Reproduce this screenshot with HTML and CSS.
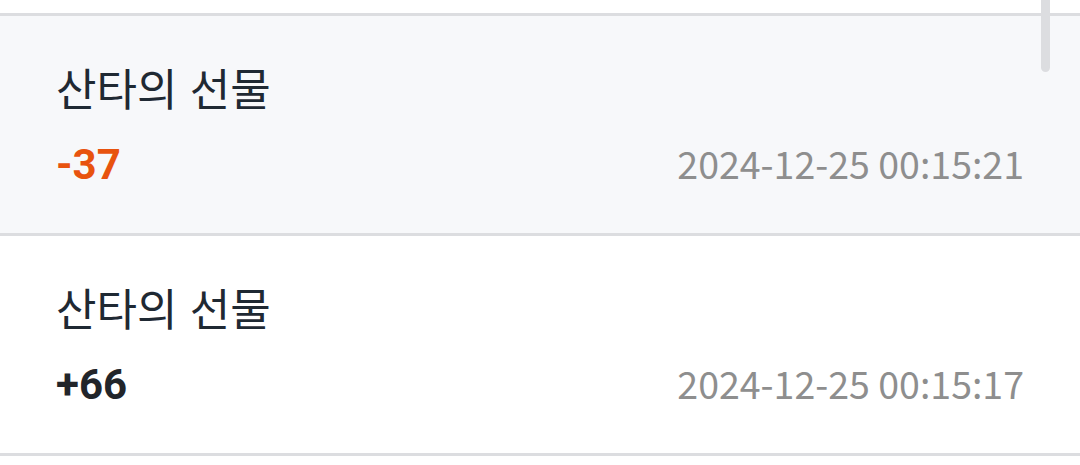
FILE: index.html
```html
<!DOCTYPE html>
<html lang="ko">
<head>
<meta charset="utf-8">
<link rel="stylesheet" href="styles.css">
</head>
<body>
<div class="page">
  <div class="top"></div>
  <ul class="list">
    <li class="row row-active">
      <div class="title">산타의 선물</div>
      <div class="meta">
        <span class="amount minus">-37</span>
        <span class="date" lang="en">2024-12-25 00:15:21</span>
      </div>
    </li>
    <li class="row">
      <div class="title">산타의 선물</div>
      <div class="meta">
        <span class="amount plus">+66</span>
        <span class="date" lang="en">2024-12-25 00:15:17</span>
      </div>
    </li>
  </ul>
  <div class="scrollbar"></div>
</div>
</body>
</html>
```
FILE: styles.css
```css
html, body {
  margin: 0;
  padding: 0;
  background: #ffffff;
}
.page {
  position: relative;
  width: 1080px;
  height: 465px;
  overflow: hidden;
  font-family: "Noto Sans CJK KR", "Noto Sans", sans-serif;
}
.top {
  height: 13px;
  border-bottom: 3px solid #dcdde0;
}
.list {
  list-style: none;
  margin: 0;
  padding: 0;
}
.row {
  height: 220px;
  box-sizing: border-box;
  border-bottom: 3px solid #dcdde0;
  padding: 2px 56px 0 56px;
  display: flex;
  flex-direction: column;
  justify-content: center;
  gap: 20px;
}
.row-active {
  background: #f7f8fa;
}
.title {
  font-size: 44px;
  line-height: 56px;
  color: #1f2933;
}
.meta {
  display: flex;
  justify-content: space-between;
  align-items: baseline;
  line-height: 56px;
}
.amount {
  font-family: Roboto, "Noto Sans", sans-serif;
  font-weight: 700;
  font-size: 42px;
}
.minus { color: #e8530e; }
.plus { color: #22252a; }
.date {
  font-size: 37.5px;
  color: #8e8e8e;
}
.scrollbar {
  position: absolute;
  top: 0;
  left: 1041px;
  width: 9px;
  height: 72px;
  border-radius: 0 0 5px 5px;
  background: #dcdde0;
}
```
